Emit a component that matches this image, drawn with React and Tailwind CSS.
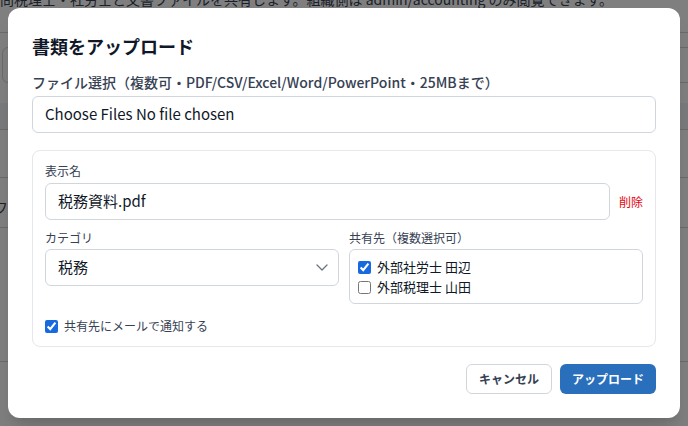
import React from "react";

function BackgroundPage() {
  return (
    <div className="text-sm text-gray-700">
      <p className="-ml-[14px] -mt-[11px] whitespace-nowrap">
        顧問税理士・社労士と文書ファイルを共有します。組織側は admin/accounting のみ閲覧できます。
      </p>
      <div className="mt-[23px] border-t border-gray-300" />
      <div className="flex items-center justify-between py-[14px] pl-[2px]">
        <div className="h-[36px] w-[300px] rounded-md border border-gray-300" />
        <div className="-mr-[40px] flex h-[36px] w-[90px] items-center rounded-md border border-gray-300 pl-[6px]">
          設定
        </div>
      </div>
      <div className="mt-[6px] h-[27px] border-b border-gray-300 bg-gray-100" />
      <div className="h-[48px] border-b border-gray-300" />
      <div className="flex h-[50px] items-end border-b border-gray-300 pb-[10px] -ml-[6px]">
        ファイル
      </div>
      <div className="h-[134px] border-b border-gray-300" />
    </div>
  );
}

function Checkbox({ checked, label, className }) {
  return (
    <label className={"flex items-center gap-[6px] " + (className || "")}>
      <input
        type="checkbox"
        defaultChecked={checked}
        className="m-0 h-[13px] w-[13px] accent-[#1769e0]"
      />
      <span>{label}</span>
    </label>
  );
}

function UploadDialog() {
  return (
    <div className="w-[672px] rounded-xl bg-white p-6 shadow-xl">
      <h2 className="mb-3 text-lg font-bold leading-7 text-gray-900">
        書類をアップロード
      </h2>

      <label className="mb-1 block text-sm font-medium leading-5 text-gray-700">
        ファイル選択（複数可・PDF/CSV/Excel/Word/PowerPoint・25MBまで）
      </label>
      <div className="flex h-[37px] items-center rounded-md border border-gray-300 px-3 text-[15px] text-gray-900">
        Choose Files No file chosen
      </div>

      <div className="mt-[17px] rounded-lg border border-gray-200 p-3">
        <div className="text-xs leading-4 text-gray-700">表示名</div>
        <div className="mt-1 flex items-center gap-[9px]">
          <div className="flex h-[37px] flex-1 items-center rounded-md border border-gray-300 px-3 text-[15px] text-gray-900">
            税務資料.pdf
          </div>
          <button className="text-xs text-red-600">削除</button>
        </div>

        <div className="mt-[10px] grid grid-cols-2 gap-[10px]">
          <div>
            <div className="mb-[3px] text-xs leading-4 text-gray-700">カテゴリ</div>
            <div className="flex h-[37px] items-center justify-between rounded-md border border-gray-300 pl-3 pr-[10px] text-[15px] text-gray-900">
              <span>税務</span>
              <svg width="12" height="7" viewBox="0 0 12 7" fill="none">
                <polyline
                  points="1,1 6,6 11,1"
                  stroke="#6b7280"
                  strokeWidth="1.3"
                  strokeLinecap="round"
                  strokeLinejoin="round"
                />
              </svg>
            </div>
          </div>
          <div>
            <div className="mb-[3px] text-xs leading-4 text-gray-700">共有先（複数選択可）</div>
            <div className="rounded-md border border-gray-300 px-2 pb-[6px] pt-[7px] text-[13px] leading-5 text-gray-900">
              <Checkbox checked label="外部社労士 田辺" />
              <Checkbox label="外部税理士 山田" />
            </div>
          </div>
        </div>

        <Checkbox
          checked
          label="共有先にメールで通知する"
          className="mt-[14px] text-xs leading-4 text-gray-700"
        />
      </div>

      <div className="mt-[17px] flex justify-end gap-2">
        <button className="h-[30px] w-[86px] rounded-md border border-gray-300 bg-white text-xs font-semibold text-gray-700">
          キャンセル
        </button>
        <button className="h-[30px] w-[96px] rounded-md bg-[#2a6fbb] text-xs font-semibold text-white">
          アップロード
        </button>
      </div>
    </div>
  );
}

export default function App() {
  return (
    <div className="relative h-[426px] w-full overflow-hidden bg-white font-['Noto_Sans_CJK_JP','Noto_Sans',sans-serif]">
      <BackgroundPage />
      <div className="absolute inset-0 flex items-center justify-center bg-black/50">
        <UploadDialog />
      </div>
    </div>
  );
}
